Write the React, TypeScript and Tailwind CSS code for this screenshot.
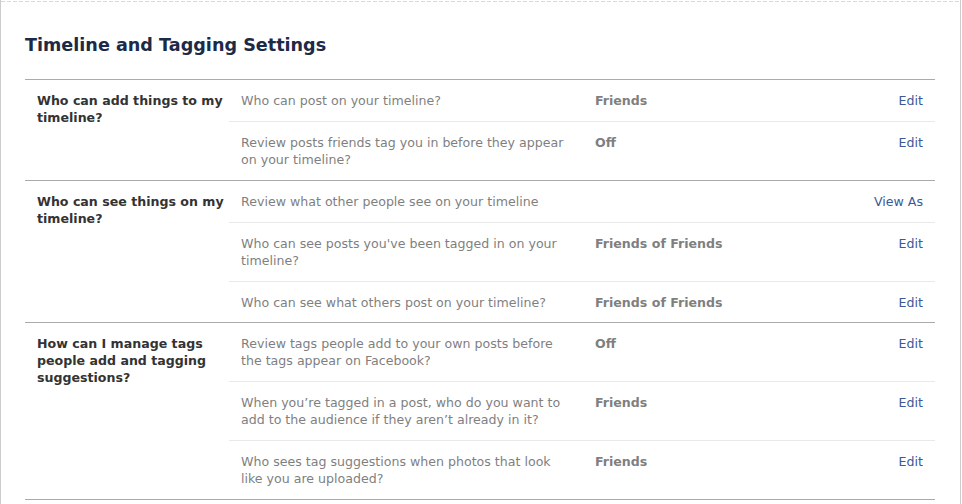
type Row = {
  question: string;
  value?: string;
  action: string;
};

type Section = {
  label: string;
  rows: Row[];
};

const sections: Section[] = [
  {
    label: "Who can add things to my timeline?",
    rows: [
      { question: "Who can post on your timeline?", value: "Friends", action: "Edit" },
      {
        question: "Review posts friends tag you in before they appear on your timeline?",
        value: "Off",
        action: "Edit",
      },
    ],
  },
  {
    label: "Who can see things on my timeline?",
    rows: [
      { question: "Review what other people see on your timeline", action: "View As" },
      {
        question: "Who can see posts you've been tagged in on your timeline?",
        value: "Friends of Friends",
        action: "Edit",
      },
      {
        question: "Who can see what others post on your timeline?",
        value: "Friends of Friends",
        action: "Edit",
      },
    ],
  },
  {
    label: "How can I manage tags people add and tagging suggestions?",
    rows: [
      {
        question: "Review tags people add to your own posts before the tags appear on Facebook?",
        value: "Off",
        action: "Edit",
      },
      {
        question:
          "When you\u2019re tagged in a post, who do you want to add to the audience if they aren\u2019t already in it?",
        value: "Friends",
        action: "Edit",
      },
      {
        question: "Who sees tag suggestions when photos that look like you are uploaded?",
        value: "Friends",
        action: "Edit",
      },
    ],
  },
];

function SettingRow({ row, first }: { row: Row; first: boolean }) {
  return (
    <div className={`flex px-3 pt-3 pb-[11.875px] ${first ? "" : "border-t border-[#e9e9e9]"}`}>
      <div className="w-[354px] shrink-0 pr-[26px] text-[#7f7f7f]">{row.question}</div>
      <div className="flex-1 font-bold text-[#7f7f7f]">{row.value}</div>
      <a className="cursor-pointer text-[#3b5998]">{row.action}</a>
    </div>
  );
}

export default function App() {
  return (
    <div
      className="h-[504px] w-[961px] overflow-hidden border-x border-[#cccccc] bg-white text-[12.6px] leading-[17px]"
      style={{ fontFamily: '"DejaVu Sans", Verdana, sans-serif' }}
    >
      <div className="mt-px h-px bg-[repeating-linear-gradient(90deg,#d3d9e3_0_4px,transparent_4px_6px)]" />

      <h2 className="ml-6 mt-[32px] text-[17.6px] font-bold leading-[22px] text-[#1c2a47]">
        Timeline and Tagging Settings
      </h2>

      <div className="ml-6 mt-[23px] w-[910px] border-t border-[#aaaaaa]">
        {sections.map((section) => (
          <div key={section.label} className="flex border-b border-[#aaaaaa]">
            <div className="w-[204px] shrink-0 py-3 pl-3 pr-[2px] font-bold text-[#333333]">
              {section.label}
            </div>
            <div className="flex-1">
              {section.rows.map((row, i) => (
                <SettingRow key={row.question} row={row} first={i === 0} />
              ))}
            </div>
          </div>
        ))}
      </div>
    </div>
  );
}
